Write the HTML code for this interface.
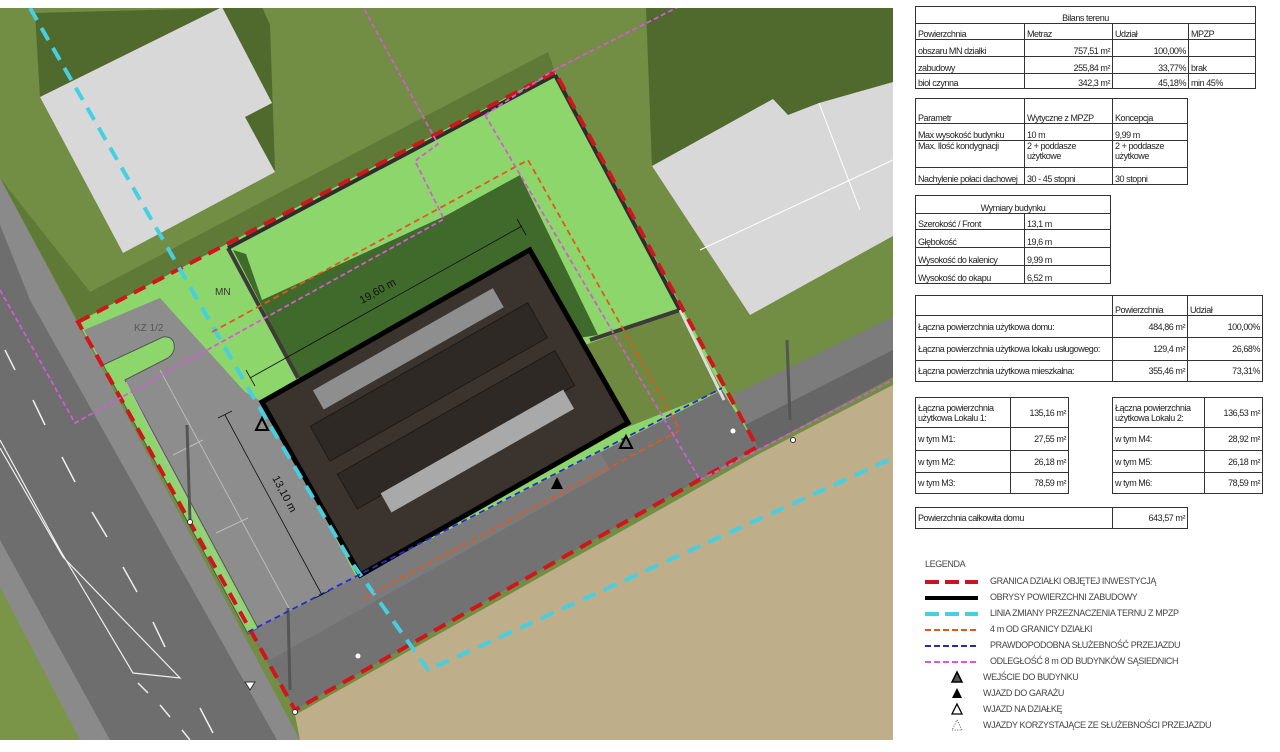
<!DOCTYPE html>
<html><head><meta charset="utf-8">
<style>
html,body{margin:0;padding:0;background:#fff;width:1280px;height:752px;overflow:hidden}
body{position:relative;font-family:"Liberation Sans",sans-serif;color:#222}
svg{position:absolute;left:0;top:0}
table{position:absolute;border-collapse:collapse;font-size:9px;table-layout:fixed}
td{border:1px solid #333;padding:0 2px;line-height:10px;vertical-align:bottom;white-space:nowrap;overflow:hidden;letter-spacing:-0.45px}
td.r{text-align:right}
td.c{text-align:center}
td.w{white-space:normal}
.leg{position:absolute;font-size:9px;color:#444;letter-spacing:-0.4px;white-space:nowrap}
</style></head><body>
<svg width="1280" height="752" viewBox="0 0 1280 752">
<defs><clipPath id="m"><rect x="0" y="8" width="893" height="732"/></clipPath></defs>
<g clip-path="url(#m)">
<rect x="0" y="8" width="893" height="732" fill="#728d44"/>
<polygon points="0,178 78,322 555,72 548,52 90,292" fill="#5f7a36"/>
<!-- left house -->
<polygon points="35,13 262,7 270,25 275,170 123,253 40,97" fill="#4f6a2c"/>
<polygon points="40,97 222,7 272,103 245,117 275,172 123,253" fill="#d8d8d8"/>
<!-- right house -->
<polygon points="646,8 893,8 893,95 652,166" fill="#4f6a2c"/>
<polygon points="652,166 773,99 788,115 819,103 893,82 893,236 750,315" fill="#d8d8d8"/>
<line x1="819" y1="103" x2="860" y2="210" stroke="#fff" stroke-width="1"/>
<line x1="700" y1="250" x2="893" y2="160" stroke="#fff" stroke-width="1"/>
<!-- road -->
<polygon points="0,178 300,740 0,740" fill="#8a8a8a"/>
<polygon points="0,225 30,300 277,740 110,740 0,540" fill="#6e6e6e"/>
<polygon points="0,587 80,740 0,740" fill="#7a9448"/>
<g stroke="#eee" stroke-width="1.5">
<line x1="5" y1="350" x2="15" y2="370"/><line x1="33" y1="400" x2="45" y2="425"/>
<line x1="62" y1="457" x2="75" y2="482"/><line x1="92" y1="512" x2="107" y2="537"/>
<line x1="123" y1="567" x2="137" y2="592"/><line x1="153" y1="622" x2="165" y2="647"/>
<line x1="200" y1="708" x2="213" y2="733"/><line x1="138" y1="683" x2="148" y2="693"/>
<line x1="160" y1="705" x2="170" y2="717"/><line x1="182" y1="730" x2="190" y2="740"/>
</g>
<polyline points="0,440 60,550 133,673 180,678 63,557 0,448" fill="none" stroke="#eee" stroke-width="1.2"/>
<!-- tan field -->
<polygon points="295,715 757,455 893,385 893,740 300,740" fill="#bfae8a"/>
<polygon points="733,395 893,317 893,377 757,450" fill="#7c7c7c"/>
<polygon points="745,425 893,350 893,377 757,450" fill="#666"/>
<!-- plot fill -->
<polygon points="78,322 555,72 757,447 295,710" fill="#8dd66b"/>
<!-- dark green lawn -->
<polygon points="233,250 246,254 262,300 447,215 520,175 598,335 300,380" fill="#3f6a2c"/>
<polygon points="585,345 680,310 722,390 625,428" fill="#6f8a40"/>
<!-- paving -->
<polygon points="84,330 160,298 245,392 262,402 357,578 722,390 757,447 295,710" fill="#8d8d8d"/>
<polygon points="250,632 722,390 757,447 295,710" fill="#727272"/>
<polygon points="250,632 600,452 610,470 270,660" fill="#7b7b7b"/>
<!-- green hook strip -->
<path d="M103,365 L163,337 Q176,336 174,350 Q172,356 166,359 L125,380 L258,628 L248,634 Z" fill="#8dd66b" stroke="#555" stroke-width="1"/>
<g stroke="#bbb" stroke-width="1" fill="none">
<polyline points="126,382 250,625"/><polyline points="160,370 290,610"/>
<line x1="173" y1="455" x2="203" y2="440"/><line x1="216" y1="533" x2="248" y2="518"/>
</g>
<g stroke="#3d3a38" stroke-width="4" fill="none">
<polyline points="228,248 298,378"/>
<polyline points="590,340 680,310"/>
</g>
<line x1="680" y1="310" x2="724" y2="400" stroke="#ddd" stroke-width="3"/>
<line x1="228" y1="248" x2="555" y2="75" stroke="#2e2e2e" stroke-width="4"/>
<line x1="555" y1="75" x2="680" y2="310" stroke="#2e2e2e" stroke-width="4"/>
<g stroke="#555" stroke-width="3"><line x1="187" y1="425" x2="190" y2="520"/><line x1="288" y1="608" x2="290" y2="690"/><line x1="787" y1="340" x2="790" y2="420"/></g>
<!-- building -->
<g transform="translate(262,402) rotate(-29.6)">
<rect x="0" y="0" width="308" height="199" fill="#3b332d" stroke="#000" stroke-width="5"/>
<rect x="30" y="45" width="250" height="40" fill="#2f2925" stroke="#1e1a17"/>
<rect x="30" y="100" width="250" height="40" fill="#2f2925" stroke="#1e1a17"/>
<rect x="50" y="15" width="207" height="22" fill="#8e8e8e"/>
<rect x="58" y="138" width="210" height="22" fill="#a9a9a9"/>
</g>
<polygon points="78,322 555,72 757,447 295,710" fill="none" stroke="#d0161b" stroke-width="4" stroke-dasharray="13,8"/>
<polyline points="30,8 255,400 350,560 428,670 893,458" fill="none" stroke="#45cfe0" stroke-width="4" stroke-dasharray="14,9"/>
<polyline points="212,332 528,160 680,430 360,600" fill="none" stroke="#e4561e" stroke-width="1.8" stroke-dasharray="6,4"/>
<line x1="248" y1="632" x2="722" y2="388" stroke="#2a2ad0" stroke-width="1.8" stroke-dasharray="6,4"/>
<g fill="none" stroke="#d55ad5" stroke-width="1.8" stroke-dasharray="5,3">
<polyline points="0,290 75,423 444,219 415,161 438,144 363,7"/>
<polyline points="554,70 678,7"/>
<polyline points="485,115 554,70"/>
<polyline points="485,115 700,480 893,380"/>
</g>
<g stroke="#111" stroke-width="0.8">
<line x1="250" y1="378" x2="522" y2="226"/><line x1="246" y1="370" x2="255" y2="386"/><line x1="517" y1="219" x2="526" y2="235"/>
<line x1="225" y1="415" x2="322" y2="595"/><line x1="218" y1="418" x2="232" y2="411"/><line x1="315" y1="598" x2="329" y2="591"/>
</g>
<text x="0" y="0" transform="translate(362,304) rotate(-29.6)" font-size="11" fill="#111" font-family="Liberation Sans">19,60 m</text>
<text x="0" y="0" transform="translate(272,478) rotate(62)" font-size="11" fill="#111" font-family="Liberation Sans">13,10 m</text>
<text x="215" y="295" font-size="10" fill="#333" font-family="Liberation Sans">MN</text>
<text x="134" y="331" font-size="10" fill="#555" font-family="Liberation Sans">KZ 1/2</text>
<polygon points="262,418 268,430 256,430" fill="none" stroke="#000" stroke-width="2"/>
<polygon points="626,436 632,448 620,448" fill="none" stroke="#000" stroke-width="2"/>
<polygon points="557,477 563,489 551,489" fill="#000"/>
<polygon points="245,682 255,682 250,690" fill="#fff" stroke="#333"/>
<circle cx="190" cy="522" r="2.5" fill="#fff" stroke="#333"/>
<circle cx="793" cy="440" r="2.5" fill="#fff" stroke="#333"/>
<circle cx="295" cy="712" r="2.5" fill="#fff" stroke="#333"/>
<circle cx="733" cy="431" r="2.5" fill="#fff"/><circle cx="358" cy="656" r="2.5" fill="#fff"/>
</g>
<line x1="925" y1="582" x2="978" y2="582" stroke="#c8161c" stroke-width="4" stroke-dasharray="14,6"/>
<line x1="925" y1="598" x2="978" y2="598" stroke="#000" stroke-width="4"/>
<line x1="925" y1="614" x2="978" y2="614" stroke="#45cfe0" stroke-width="4" stroke-dasharray="14,6"/>
<line x1="925" y1="630" x2="978" y2="630" stroke="#e4561e" stroke-width="2" stroke-dasharray="6,3"/>
<line x1="925" y1="646" x2="978" y2="646" stroke="#2a2ab0" stroke-width="2" stroke-dasharray="6,3"/>
<line x1="925" y1="662" x2="978" y2="662" stroke="#d55ad5" stroke-width="2" stroke-dasharray="6,3"/>
<polygon points="957,672 962,682 952,682" fill="#555" stroke="#000" stroke-width="1.5"/>
<polygon points="957,688 962,698 952,698" fill="#000"/>
<polygon points="957,704 962,714 952,714" fill="none" stroke="#000" stroke-width="1.3"/>
<polygon points="957,720 962,730 952,730" fill="none" stroke="#555" stroke-width="1" stroke-dasharray="1,1.5"/>
</svg>

<table style="left:915px;top:6px;width:340px">
<colgroup><col style="width:109px"><col style="width:88px"><col style="width:76px"><col style="width:67px"></colgroup>
<tr style="height:17px"><td class="c" colspan="4">Bilans terenu</td></tr>
<tr style="height:16px"><td>Powierzchnia</td><td>Metraz</td><td>Udział</td><td>MPZP</td></tr>
<tr style="height:17px"><td>obszaru MN działki</td><td class="r">757,51 m²</td><td class="r">100,00%</td><td></td></tr>
<tr style="height:17px"><td>zabudowy</td><td class="r">255,84 m²</td><td class="r">33,77%</td><td>brak</td></tr>
<tr style="height:15px"><td>biol czynna</td><td class="r">342,3 m²</td><td class="r">45,18%</td><td>min 45%</td></tr>
</table>

<table style="left:915px;top:98px;width:272px">
<colgroup><col style="width:109px"><col style="width:88px"><col style="width:75px"></colgroup>
<tr style="height:25px"><td>Parametr</td><td>Wytyczne z MPZP</td><td>Koncepcja</td></tr>
<tr style="height:17px"><td>Max wysokość budynku</td><td>10 m</td><td>9,99 m</td></tr>
<tr style="height:27px"><td style="vertical-align:top">Max. Ilość kondygnacji</td><td class="w" style="vertical-align:top">2 + poddasze użytkowe</td><td class="w" style="vertical-align:top">2 + poddasze użytkowe</td></tr>
<tr style="height:17px"><td>Nachylenie połaci dachowej</td><td>30 - 45 stopni</td><td>30 stopni</td></tr>
</table>

<table style="left:915px;top:195px;width:195px">
<colgroup><col style="width:109px"><col style="width:86px"></colgroup>
<tr style="height:18px"><td class="c" colspan="2">Wymiary budynku</td></tr>
<tr style="height:16px"><td>Szerokość / Front</td><td>13,1 m</td></tr>
<tr style="height:18px"><td>Głębokość</td><td>19,6 m</td></tr>
<tr style="height:18px"><td>Wysokość do kalenicy</td><td>9,99 m</td></tr>
<tr style="height:18px"><td>Wysokość do okapu</td><td>6,52 m</td></tr>
</table>

<table style="left:915px;top:295px;width:347px">
<colgroup><col style="width:197px"><col style="width:75px"><col style="width:75px"></colgroup>
<tr style="height:20px"><td></td><td>Powierzchnia</td><td>Udział</td></tr>
<tr style="height:22px"><td style="vertical-align:middle">Łączna powierzchnia użytkowa domu:</td><td class="r" style="vertical-align:middle">484,86 m²</td><td class="r" style="vertical-align:middle">100,00%</td></tr>
<tr style="height:23px"><td style="vertical-align:middle">Łączna powierzchnia użytkowa lokalu usługowego:</td><td class="r" style="vertical-align:middle">129,4 m²</td><td class="r" style="vertical-align:middle">26,68%</td></tr>
<tr style="height:21px"><td style="vertical-align:middle">Łączna powierzchnia użytkowa mieszkalna:</td><td class="r" style="vertical-align:middle">355,46 m²</td><td class="r" style="vertical-align:middle">73,31%</td></tr>
</table>

<table style="left:915px;top:397px;width:153px">
<colgroup><col style="width:95px"><col style="width:58px"></colgroup>
<tr style="height:30px"><td class="w" style="vertical-align:middle">Łączna powierzchnia użytkowa Lokalu 1:</td><td class="r" style="vertical-align:middle">135,16 m²</td></tr>
<tr style="height:23px"><td style="vertical-align:middle">w tym M1:</td><td class="r" style="vertical-align:middle">27,55 m²</td></tr>
<tr style="height:22px"><td style="vertical-align:middle">w tym M2:</td><td class="r" style="vertical-align:middle">26,18 m²</td></tr>
<tr style="height:21px"><td style="vertical-align:middle">w tym M3:</td><td class="r" style="vertical-align:middle">78,59 m²</td></tr>
</table>

<table style="left:1112px;top:397px;width:150px">
<colgroup><col style="width:92px"><col style="width:58px"></colgroup>
<tr style="height:30px"><td class="w" style="vertical-align:middle">Łączna powierzchnia użytkowa Lokalu 2:</td><td class="r" style="vertical-align:middle">136,53 m²</td></tr>
<tr style="height:23px"><td style="vertical-align:middle">w tym M4:</td><td class="r" style="vertical-align:middle">28,92 m²</td></tr>
<tr style="height:22px"><td style="vertical-align:middle">w tym M5:</td><td class="r" style="vertical-align:middle">26,18 m²</td></tr>
<tr style="height:21px"><td style="vertical-align:middle">w tym M6:</td><td class="r" style="vertical-align:middle">78,59 m²</td></tr>
</table>

<table style="left:915px;top:507px;width:272px">
<colgroup><col style="width:197px"><col style="width:75px"></colgroup>
<tr style="height:21px"><td style="vertical-align:middle">Powierzchnia całkowita domu</td><td class="r" style="vertical-align:middle">643,57 m²</td></tr>
</table>

<div class="leg" style="left:925px;top:559px">LEGENDA</div>
<div class="leg" style="left:990px;top:576px">GRANICA DZIAŁKI OBJĘTEJ INWESTYCJĄ</div>
<div class="leg" style="left:990px;top:592px">OBRYSY POWIERZCHNI ZABUDOWY</div>
<div class="leg" style="left:990px;top:608px">LINIA ZMIANY PRZEZNACZENIA TERNU Z MPZP</div>
<div class="leg" style="left:990px;top:624px">4 m OD GRANICY DZIAŁKI</div>
<div class="leg" style="left:990px;top:640px">PRAWDOPODOBNA SŁUŻEBNOŚĆ PRZEJAZDU</div>
<div class="leg" style="left:990px;top:656px">ODLEGŁOŚĆ 8 m OD BUDYNKÓW SĄSIEDNICH</div>
<div class="leg" style="left:983px;top:672px">WEJŚCIE DO BUDYNKU</div>
<div class="leg" style="left:983px;top:688px">WJAZD DO GARAŻU</div>
<div class="leg" style="left:983px;top:704px">WJAZD NA DZIAŁKĘ</div>
<div class="leg" style="left:983px;top:720px">WJAZDY KORZYSTAJĄCE ZE SŁUŻEBNOŚCI PRZEJAZDU</div>
</body></html>
